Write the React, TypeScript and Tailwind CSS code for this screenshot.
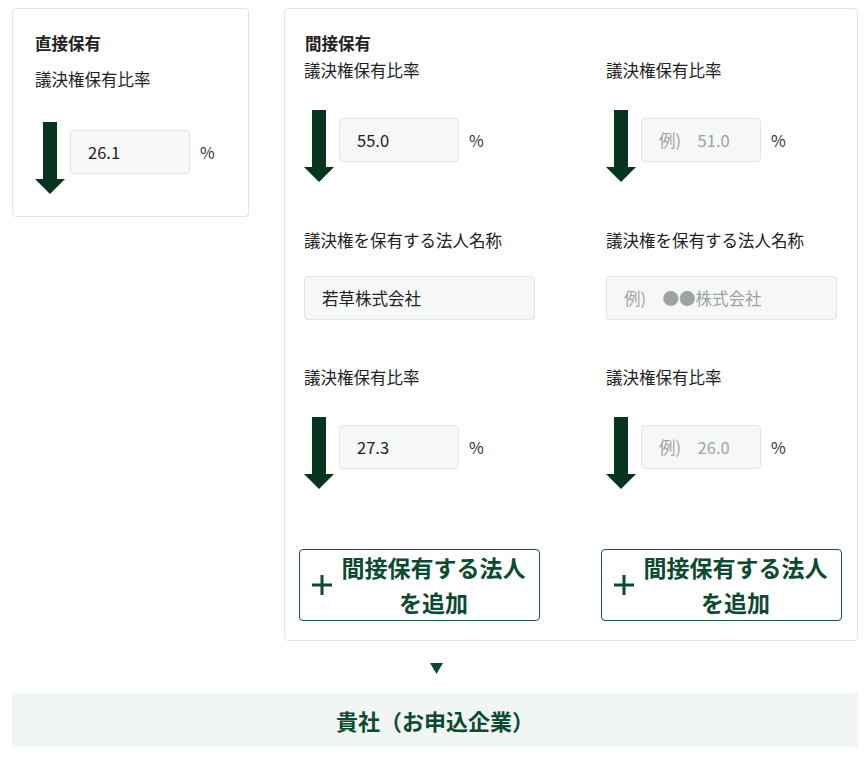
import React from 'react';

const font = { fontFamily: '"Noto Sans CJK JP", "Noto Sans", sans-serif' };

const DownArrow = () => (
  <svg width="30" height="72" viewBox="0 0 30 72" className="shrink-0">
    <rect x="8" y="0" width="14" height="58" fill="#05341f" />
    <polygon points="0,57 30,57 15,72" fill="#05341f" />
  </svg>
);

const RatioInput = ({ value, placeholder }: { value?: string; placeholder?: string }) => (
  <div className="flex items-start">
    <DownArrow />
    <div className="ml-[5px] mt-2 flex items-center">
      <div className="w-[120px] h-[44px] rounded bg-[#f6f7f7] border border-[#e1e5e4] flex items-center pl-[17px] text-[16.5px]">
        {value ? (
          <span className="text-[#222]">{value}</span>
        ) : (
          <span className="text-[#9ea3a2]">{placeholder}</span>
        )}
      </div>
      <span className="ml-[10px] text-[16px] text-[#333]">%</span>
    </div>
  </div>
);

const Label = ({ children }: { children: React.ReactNode }) => (
  <div className="text-[16.5px] leading-[22px] text-[#222]">{children}</div>
);

const AddButton = () => (
  <button className="-mx-[5px] h-[72px] rounded border border-[#1b5640] bg-white flex items-center pl-[10px] pr-[6px] text-[#0c4a31]">
    <svg width="24" height="24" viewBox="0 0 24 24" className="shrink-0">
      <path d="M12 2v20M2 12h20" stroke="#0c4a31" strokeWidth="3" />
    </svg>
    <span className="flex-1 text-center font-bold text-[23px] leading-[35px]">
      間接保有する法人
      <br />
      を追加
    </span>
  </button>
);

const IndirectColumn = ({ first }: { first: boolean }) => (
  <div className="flex flex-col">
    <Label>議決権保有比率</Label>
    <div className="mt-[29px]">
      <RatioInput value={first ? '55.0' : undefined} placeholder="例)　51.0" />
    </div>
    <div className="mt-[47px]">
      <Label>議決権を保有する法人名称</Label>
    </div>
    <div className="mt-[25px] h-[44px] rounded bg-[#f6f7f7] border border-[#e1e5e4] flex items-center pl-[17px] text-[16.5px]">
      {first ? (
        <span className="text-[#222]">若草株式会社</span>
      ) : (
        <span className="text-[#9ea3a2]">例)　●●株式会社</span>
      )}
    </div>
    <div className="mt-[46px]">
      <Label>議決権保有比率</Label>
    </div>
    <div className="mt-[29px]">
      <RatioInput value={first ? '27.3' : undefined} placeholder="例)　26.0" />
    </div>
    <div className="mt-[60px] flex flex-col">
      <AddButton />
    </div>
  </div>
);

export default function App() {
  return (
    <div style={font} className="w-[868px] bg-white pl-[12px] pr-[10px] pt-[8px] pb-4 text-[#222]">
      <div className="flex items-start gap-[35px]">
        <div className="w-[237px] rounded border border-[#e1e5e4] pl-[22px] pt-[23px] pb-[22px]">
          <div className="text-[16.5px] leading-[22px] font-bold">直接保有</div>
          <div className="mt-[14px]">
            <Label>議決権保有比率</Label>
          </div>
          <div className="mt-[32px]">
            <RatioInput value="26.1" />
          </div>
        </div>
        <div className="flex-1 rounded border border-[#e1e5e4] pl-[19px] pr-[20px] pt-[23px] pb-[19px]">
          <div className="pl-px text-[16.5px] leading-[22px] font-bold">間接保有</div>
          <div className="mt-[5px] grid grid-cols-2 gap-x-[71px]">
            <IndirectColumn first />
            <IndirectColumn first={false} />
          </div>
        </div>
      </div>
      <div className="flex justify-center mt-[22px] pl-[2px]">
        <svg width="13" height="11" viewBox="0 0 13 11">
          <polygon points="0,0 13,0 6.5,11" fill="#0b4a31" />
        </svg>
      </div>
      <div className="mt-[19px] h-[54px] bg-[#f1f5f4] flex items-center justify-center text-[22px] font-bold text-[#0c4a31]">
        貴社（お申込企業）
      </div>
    </div>
  );
}
